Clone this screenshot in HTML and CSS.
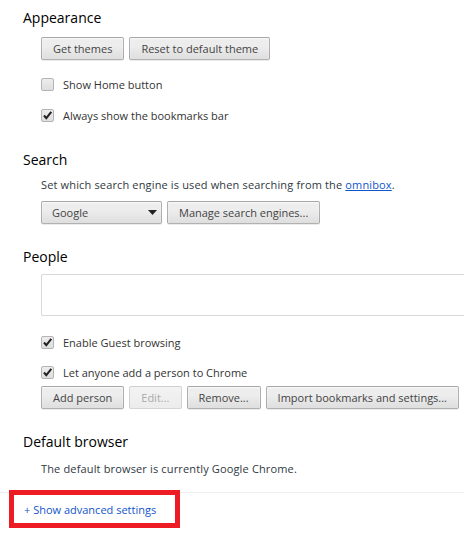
FILE: index.html
```html
<!DOCTYPE html>
<html lang="en">
<head>
    <meta charset="UTF-8">
    <title>Settings</title>
    <link rel="stylesheet" href="styles.css">
</head>
<body>
    <div class="page">
        <section class="section appearance">
            <h3>Appearance</h3>
            <div class="content">
                <div class="btn-row first">
                    <button class="btn">Get themes</button>
                    <button class="btn">Reset to default theme</button>
                </div>
                <label class="check first-check">
                    <span class="box"></span>
                    Show Home button
                </label>
                <label class="check">
                    <span class="box checked"><svg viewBox="0 0 11 11" width="11" height="11"><path d="M2 5.5 L4.3 8.2 L9.3 1.8" fill="none" stroke="#222" stroke-width="2"/></svg></span>
                    Always show the bookmarks bar
                </label>
            </div>
        </section>

        <section class="section search">
            <h3>Search</h3>
            <div class="content">
                <p class="desc">Set which search engine is used when searching from the <a href="#">omnibox</a>.</p>
                <div class="btn-row">
                    <div class="btn select">
                        <span>Google</span>
                        <svg width="9" height="5" viewBox="0 0 9 5"><path d="M0 0 H9 L4.5 5 Z" fill="#222"/></svg>
                    </div>
                    <button class="btn">Manage search engines...</button>
                </div>
            </div>
        </section>

        <section class="section people">
            <h3>People</h3>
            <div class="content">
                <div class="profiles"></div>
                <label class="check first-check">
                    <span class="box checked"><svg viewBox="0 0 11 11" width="11" height="11"><path d="M2 5.5 L4.3 8.2 L9.3 1.8" fill="none" stroke="#222" stroke-width="2"/></svg></span>
                    Enable Guest browsing
                </label>
                <label class="check">
                    <span class="box checked"><svg viewBox="0 0 11 11" width="11" height="11"><path d="M2 5.5 L4.3 8.2 L9.3 1.8" fill="none" stroke="#222" stroke-width="2"/></svg></span>
                    Let anyone add a person to Chrome
                </label>
                <div class="btn-row tight">
                    <button class="btn">Add person</button>
                    <button class="btn" disabled>Edit...</button>
                    <button class="btn">Remove...</button>
                    <button class="btn">Import bookmarks and settings...</button>
                </div>
            </div>
        </section>

        <section class="section browser">
            <h3>Default browser</h3>
            <div class="content">
                <p class="desc">The default browser is currently Google Chrome.</p>
            </div>
        </section>

        <div class="footer">
            <a href="#" class="advanced">+ Show advanced settings</a>
            <div class="highlight"></div>
        </div>
    </div>
</body>
</html>
```

FILE: styles.css
```css
body {
    margin: 0;
    background: #fff;
    font-family: "Open Sans", "Noto Sans", sans-serif;
    font-size: 11px;
    color: #303942;
    overflow: hidden;
}
.page {
    width: 464px;
    height: 544px;
}
.section {
    padding-left: 23px;
}
h3 {
    margin: 0;
    font-size: 14px;
    font-weight: normal;
    line-height: 20px;
    color: #000;
}
.content {
    padding-left: 18px;
    display: flex;
    flex-direction: column;
}
.appearance {
    padding-top: 8px;
}
.search {
    margin-top: 25px;
}
.people {
    margin-top: 23px;
}
.browser {
    margin-top: 23px;
}
.btn-row {
    display: flex;
    gap: 5px;
    margin-top: 7px;
}
.btn-row.first {
    margin-top: 9px;
}
.btn-row.tight {
    margin-top: 4px;
}
.btn {
    flex-shrink: 0;
    white-space: nowrap;
    height: 23px;
    box-sizing: border-box;
    padding: 0 11px;
    font-family: inherit;
    font-size: 11px;
    color: #444;
    border: 1px solid rgba(0, 0, 0, 0.25);
    border-radius: 2px;
    background: linear-gradient(#ededed, #ededed 38%, #dedede);
    box-shadow: 0 1px 0 rgba(0, 0, 0, 0.08), inset 0 1px 2px rgba(255, 255, 255, 0.75);
    display: flex;
    align-items: center;
}
.btn:disabled {
    color: #aaa;
    border-color: rgba(0, 0, 0, 0.12);
    background: linear-gradient(#f3f3f3, #ececec);
    box-shadow: none;
}
.select {
    width: 121px;
    justify-content: space-between;
    padding: 0 4px 0 10px;
}
.check {
    display: flex;
    align-items: center;
    gap: 9px;
    height: 20px;
    margin-top: 11px;
    color: #333;
}
.check.first-check {
    margin-top: 14px;
}
.people .check.first-check {
    margin-top: 16px;
}
.people .check {
    margin-top: 10px;
}
.box {
    width: 13px;
    height: 13px;
    box-sizing: border-box;
    border: 1px solid #b4b4b4;
    border-radius: 2px;
    background: linear-gradient(#ededed, #dedede);
    display: flex;
    align-items: center;
    justify-content: center;
}
.desc {
    margin: 6px 0 0;
    line-height: 18px;
    letter-spacing: 0.15px;
}
.browser .desc {
    margin-top: 8px;
}
a {
    color: #15c;
}
.profiles {
    margin-top: 7px;
    height: 42px;
    box-sizing: border-box;
    border: 1px solid #d9d9d9;
    border-right: none;
    border-radius: 2px 0 0 2px;
}
.footer {
    position: relative;
    margin-top: 14px;
    border-top: 1px solid #eee;
    padding: 8px 0 0 24px;
    line-height: 18px;
}
.advanced {
    text-decoration: none;
}
.highlight {
    position: absolute;
    left: 9px;
    top: -3px;
    width: 171px;
    height: 38px;
    box-sizing: border-box;
    border: 5px solid #ed1c24;
}
```
